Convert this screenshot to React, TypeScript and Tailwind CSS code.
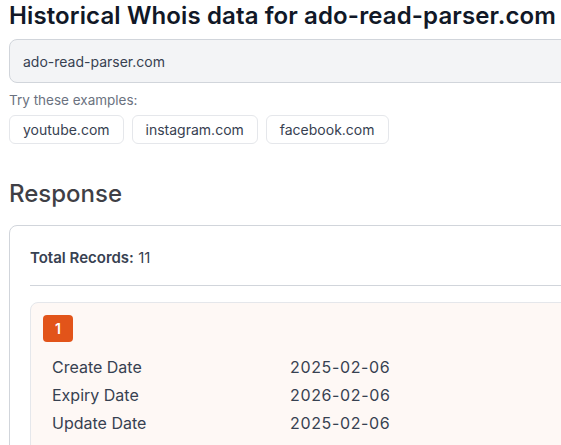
export default function App() {
  const examples = ['youtube.com', 'instagram.com', 'facebook.com'];
  const rows = [
    { label: 'Create Date', value: '2025-02-06' },
    { label: 'Expiry Date', value: '2026-02-06' },
    { label: 'Update Date', value: '2025-02-06' },
  ];

  return (
    <div className="w-full h-[445px] overflow-hidden bg-white font-['Inter','Liberation_Sans',sans-serif]">
      <div className="w-[780px] pl-[9px]">
        {/* Title */}
        <h1 className="text-[24px] leading-8 font-semibold tracking-[0.005em] text-[#111827]">
          Historical Whois data for ado-read-parser.com
        </h1>

        {/* Search input */}
        <div className="mt-[7px] h-[44px] rounded-lg border border-[#d1d5db] bg-[#f3f4f6] flex items-center px-[13px] text-[14px] text-[#374151]">
          ado-read-parser.com
        </div>

        <p className="mt-[8px] text-[13.5px] leading-[18px] text-[#6b7280]">Try these examples:</p>
        <div className="mt-[6px] flex gap-2">
          {examples.map((e) => (
            <button
              key={e}
              className="h-[29px] px-[13px] rounded-md border border-[#e5e7eb] bg-white text-[14px] text-[#374151]"
            >
              {e}
            </button>
          ))}
        </div>

        {/* Response */}
        <h2 className="mt-[34px] text-[24px] leading-8 font-medium text-[#3f3f46]">Response</h2>

        <div className="mt-[15px] rounded-lg border border-[#d1d5db] bg-white px-5 pt-[21px] pb-6">
          <p className="text-[15px] leading-[22px] text-[#374151]">
            <span className="font-semibold">Total Records:</span> 11
          </p>
          <div className="mt-4 border-t border-[#d1d5db]" />

          <div className="mt-4 rounded-lg border border-[#e5e7eb] bg-[#fef8f5] px-3 pt-3 pb-4">
            <div className="w-[30px] h-[27px] rounded bg-[#e2541a] flex items-center justify-center text-white text-[14px] font-semibold">
              1
            </div>
            <div className="mt-[11px] pl-[9px]">
              {rows.map((r) => (
                <div key={r.label} className="flex h-7 items-center text-[16px] text-[#374151]">
                  <span className="w-[238px]">{r.label}</span>
                  <span className="tracking-[0.04em]">{r.value}</span>
                </div>
              ))}
            </div>
          </div>
        </div>
      </div>
    </div>
  );
}
